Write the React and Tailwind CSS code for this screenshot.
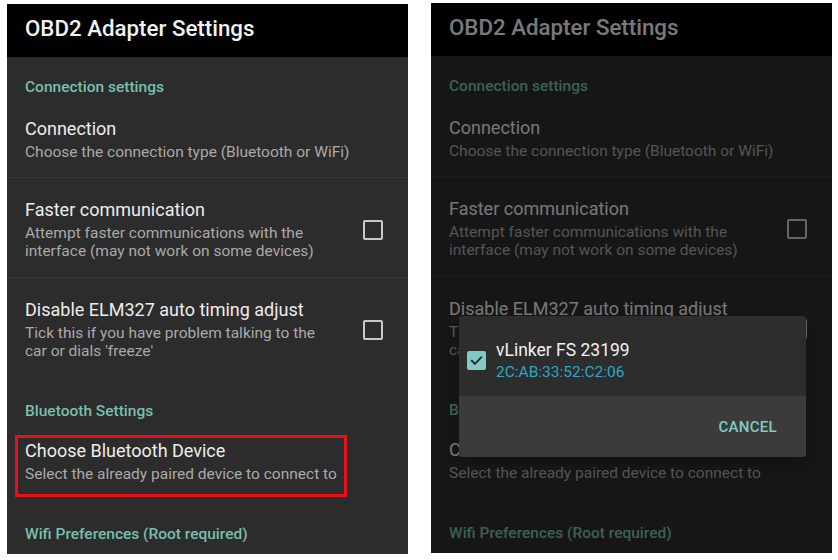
import React from 'react'

const teal = 'text-[#78bfae]'

const Checkbox = () => (
  <div className="w-5 h-5 rounded-[2px] border-2 border-[#c9c9c9] shrink-0" />
)

const Category = ({ children, className = '' }) => (
  <div className={`px-[18px] text-[15.5px] leading-4 font-medium ${teal} ${className}`}>{children}</div>
)

const Item = ({ title, lines, checkbox, className = '' }) => (
  <div className={`flex items-center justify-between pl-[18px] pr-[25px] ${className}`}>
    <div>
      <div className="text-[18px] leading-[22px] text-[#ececec]">{title}</div>
      <div className="mt-[3px] text-[15.5px] leading-[18px] text-[#a9a9a9]">
        {lines.map((l, i) => (
          <div key={i}>{l}</div>
        ))}
      </div>
    </div>
    {checkbox && <Checkbox />}
  </div>
)

const Screen = ({ highlight, children }) => (
  <div className="relative w-[401px] h-[550px] bg-[#2c2c2c] overflow-hidden flex flex-col">
    <div className="h-[53px] bg-black flex items-center px-[18px] pb-[4px] shrink-0">
      <h1 className="text-[22.3px] font-medium text-[#f2f2f2]">OBD2 Adapter Settings</h1>
    </div>
    <Category className="pt-[22px] pb-3">Connection settings</Category>
    <Item className="pt-[11px] pb-[16px]" title="Connection" lines={['Choose the connection type (Bluetooth or WiFi)']} />
    <div className="h-px bg-[#383838]" />
    <Item
      className="pt-[21px] pb-[17px]"
      title="Faster communication"
      lines={['Attempt faster communications with the', 'interface (may not work on some devices)']}
      checkbox
    />
    <div className="h-px bg-[#383838]" />
    <Item
      className="pt-[21px] pb-[18px]"
      title="Disable ELM327 auto timing adjust"
      lines={['Tick this if you have problem talking to the', "car or dials 'freeze'"]}
      checkbox
    />
    <Category className="pt-[25px]">Bluetooth Settings</Category>
    <div className="relative mt-[21px]">
      <Item title="Choose Bluetooth Device" lines={['Select the already paired device to connect to']} />
      {highlight && (
        <div className="absolute left-[8px] top-[-5px] w-[332px] h-[62px] border-[3px] border-[#e8101a]" />
      )}
    </div>
    <Category className="pt-[43px]">Wifi Preferences (Root required)</Category>
    {children}
  </div>
)

const Dialog = () => (
  <div className="absolute left-[28px] top-[313px] w-[347px] rounded-[3px] overflow-hidden shadow-lg">
    <div className="h-[80px] bg-[#2d2d2d] flex items-center pl-[8px] pt-[8px] gap-[10px]">
      <div className="w-[19px] h-[19px] rounded-[2px] bg-[#80cbc4] flex items-center justify-center">
        <svg width="15" height="15" viewBox="0 0 24 24" fill="none" stroke="#2d2d2d" strokeWidth="3.2" strokeLinecap="square">
          <path d="M4.5 12.5l5 5 10-10.5" />
        </svg>
      </div>
      <div>
        <div className="text-[17.5px] leading-[22px] text-[#f0f0f0]">vLinker FS 23199</div>
        <div className="mt-[2px] text-[15.5px] leading-[18px] text-[#2ba6c4]">2C:AB:33:52:C2:06</div>
      </div>
    </div>
    <div className="h-[61px] bg-[#3b3b3b] flex items-center justify-end pr-[29px] pt-[2px]">
      <span className="text-[15px] font-medium text-[#80cbc4] tracking-[0.3px]">CANCEL</span>
    </div>
  </div>
)

export default function App() {
  return (
    <div className="w-[838px] h-[560px] bg-white flex font-['Roboto',sans-serif]">
      <div className="ml-[7px] mt-[4px]">
        <Screen highlight />
      </div>
      <div className="ml-[23px] mt-[3px]">
        <Screen>
          <div className="absolute inset-0 bg-black/50" />
          <Dialog />
        </Screen>
      </div>
    </div>
  )
}
